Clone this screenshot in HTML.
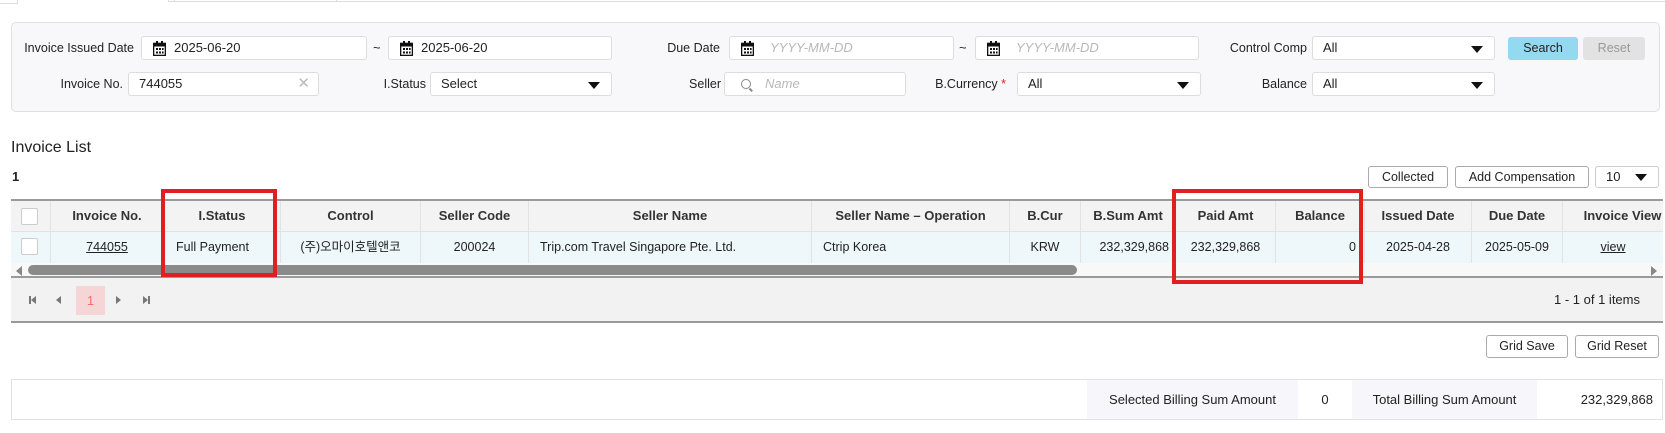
<!DOCTYPE html>
<html><head><meta charset="utf-8"><style>
*{box-sizing:border-box;margin:0;padding:0}
body{width:1665px;height:433px;background:#fff;font-family:"Liberation Sans","Noto Sans CJK KR",sans-serif;font-size:13px;color:#222;position:relative;overflow:hidden}
.a{position:absolute}
.lbl{position:absolute;font-size:12.5px;color:#222;line-height:24px;text-align:right}
.inp{position:absolute;background:#fff;border:1px solid #dcdcdc;border-radius:3px;height:24px;line-height:22px;padding-left:10px;font-size:13px}
.ph{color:#b8b8b8;font-style:italic}
.cal{position:absolute;left:11px;top:4px}
.arr{position:absolute;right:11px;top:9px;width:0;height:0;border-left:6px solid transparent;border-right:6px solid transparent;border-top:7px solid #111}
.btn{position:absolute;border:1px solid #aaa;border-radius:3px;background:#fff;text-align:center;font-size:12.5px}
.c{position:absolute;top:0;height:100%;border-right:1px solid #e2e2e2;text-align:center;font-size:12.5px}
.hr .c{font-weight:bold;font-size:13px;color:#333}
.red{position:absolute;border:4px solid #e02020}
</style></head><body>
<div class="a" style="left:0;top:0;width:18px;height:4px;border-bottom:1px solid #ddd;border-right:1px solid #ddd"></div>
<div class="a" style="left:168px;top:0;width:1497px;height:2px;border-bottom:1px solid #ddd"></div>
<div class="a" style="left:168px;top:0;width:7px;height:2px;border-left:1px solid #ddd;border-right:1px solid #ddd"></div>
<div class="a" style="left:336px;top:0;width:1px;height:2px;background:#ddd"></div>

<div class="a" style="left:11px;top:22px;width:1649px;height:90px;background:#f8f7fa;border:1px solid #e0dfe3;border-radius:5px"></div>
<div class="lbl" style="left:20px;top:36px;width:114px">Invoice Issued Date</div>
<div class="inp" style="left:141px;top:36px;width:226px;padding-left:32px"><svg class="cal" width="13" height="15" viewBox="0 0 13 15"><rect x="3" y="0" width="2" height="4" fill="#111"/><rect x="8" y="0" width="2" height="4" fill="#111"/><rect x="0.5" y="2.5" width="12" height="12" fill="#fff" stroke="#111" stroke-width="1.6"/><rect x="0.5" y="2.5" width="12" height="3" fill="#111"/><g fill="#111"><rect x="3" y="7" width="2" height="2"/><rect x="6" y="7" width="2" height="2"/><rect x="9" y="7" width="1.6" height="2"/><rect x="3" y="10.5" width="2" height="2"/><rect x="6" y="10.5" width="2" height="2"/><rect x="9" y="10.5" width="1.6" height="2"/></g></svg>2025-06-20</div>
<div class="a" style="left:373px;top:36px;line-height:24px">~</div>
<div class="inp" style="left:388px;top:36px;width:224px;padding-left:32px"><svg class="cal" width="13" height="15" viewBox="0 0 13 15"><rect x="3" y="0" width="2" height="4" fill="#111"/><rect x="8" y="0" width="2" height="4" fill="#111"/><rect x="0.5" y="2.5" width="12" height="12" fill="#fff" stroke="#111" stroke-width="1.6"/><rect x="0.5" y="2.5" width="12" height="3" fill="#111"/><g fill="#111"><rect x="3" y="7" width="2" height="2"/><rect x="6" y="7" width="2" height="2"/><rect x="9" y="7" width="1.6" height="2"/><rect x="3" y="10.5" width="2" height="2"/><rect x="6" y="10.5" width="2" height="2"/><rect x="9" y="10.5" width="1.6" height="2"/></g></svg>2025-06-20</div>
<div class="lbl" style="left:40px;top:72px;width:83px">Invoice No.</div>
<div class="inp" style="left:128px;top:72px;width:191px">744055<span class="a" style="right:8px;top:0;color:#bbb;font-size:15px">✕</span></div>
<div class="lbl" style="left:370px;top:72px;width:56px">I.Status</div>
<div class="inp" style="left:430px;top:72px;width:182px">Select<span class="arr"></span></div>

<div class="lbl" style="left:650px;top:36px;width:70px">Due Date</div>
<div class="inp" style="left:729px;top:36px;width:225px;padding-left:40px"><svg class="cal" width="13" height="15" viewBox="0 0 13 15"><rect x="3" y="0" width="2" height="4" fill="#111"/><rect x="8" y="0" width="2" height="4" fill="#111"/><rect x="0.5" y="2.5" width="12" height="12" fill="#fff" stroke="#111" stroke-width="1.6"/><rect x="0.5" y="2.5" width="12" height="3" fill="#111"/><g fill="#111"><rect x="3" y="7" width="2" height="2"/><rect x="6" y="7" width="2" height="2"/><rect x="9" y="7" width="1.6" height="2"/><rect x="3" y="10.5" width="2" height="2"/><rect x="6" y="10.5" width="2" height="2"/><rect x="9" y="10.5" width="1.6" height="2"/></g></svg><span class="ph">YYYY-MM-DD</span></div>
<div class="a" style="left:959px;top:36px;line-height:24px">~</div>
<div class="inp" style="left:975px;top:36px;width:224px;padding-left:40px"><svg class="cal" width="13" height="15" viewBox="0 0 13 15"><rect x="3" y="0" width="2" height="4" fill="#111"/><rect x="8" y="0" width="2" height="4" fill="#111"/><rect x="0.5" y="2.5" width="12" height="12" fill="#fff" stroke="#111" stroke-width="1.6"/><rect x="0.5" y="2.5" width="12" height="3" fill="#111"/><g fill="#111"><rect x="3" y="7" width="2" height="2"/><rect x="6" y="7" width="2" height="2"/><rect x="9" y="7" width="1.6" height="2"/><rect x="3" y="10.5" width="2" height="2"/><rect x="6" y="10.5" width="2" height="2"/><rect x="9" y="10.5" width="1.6" height="2"/></g></svg><span class="ph">YYYY-MM-DD</span></div>
<div class="lbl" style="left:660px;top:72px;width:61px">Seller</div>
<div class="inp" style="left:724px;top:72px;width:182px;padding-left:40px"><span class="a" style="left:16px;top:6px;width:10px;height:10px;border:1.5px solid #888;border-radius:50%"></span><span class="a" style="left:24px;top:16px;width:4px;height:1.5px;background:#888;transform:rotate(45deg)"></span><span class="ph">Name</span></div>
<div class="lbl" style="left:900px;top:72px;width:106px">B.Currency <span style="color:#e02020">*</span></div>
<div class="inp" style="left:1017px;top:72px;width:184px">All<span class="arr"></span></div>

<div class="lbl" style="left:1200px;top:36px;width:107px">Control Comp</div>
<div class="inp" style="left:1312px;top:36px;width:183px">All<span class="arr"></span></div>
<div class="a" style="left:1508px;top:37px;width:70px;height:23px;background:#93d9f0;border-radius:3px;text-align:center;line-height:23px;font-size:12.5px">Search</div>
<div class="a" style="left:1583px;top:37px;width:62px;height:23px;background:#e2e2e2;border-radius:3px;text-align:center;line-height:23px;font-size:12.5px;color:#999">Reset</div>
<div class="lbl" style="left:1230px;top:72px;width:77px">Balance</div>
<div class="inp" style="left:1312px;top:72px;width:183px">All<span class="arr"></span></div>

<div class="a" style="left:11px;top:138px;font-size:16px;line-height:20px">Invoice List</div>
<div class="a" style="left:12px;top:169px;font-size:13px;font-weight:bold;line-height:16px">1</div>
<div class="btn" style="left:1368px;top:166px;width:80px;height:22px;line-height:20px">Collected</div>
<div class="btn" style="left:1455px;top:166px;width:134px;height:22px;line-height:20px">Add Compensation</div>
<div class="inp" style="left:1595px;top:166px;width:64px;height:22px;line-height:20px;border-color:#ccc">10<span class="arr" style="top:7px"></span></div>

<div class="a" style="left:11px;top:199px;width:1652px;height:124px;overflow:hidden;border-top:2px solid #9a9a9a">
 <div class="a hr" style="left:0;top:0;width:1660px;height:31px;background:#f3f3f3;border-bottom:1px solid #e2e2e2;line-height:30px">
  <div class="c" style="left:0;width:40px"><span class="a" style="left:10px;top:7px;width:17px;height:17px;background:#fff;border:1px solid #ccc;border-radius:2px"></span></div>
  <div class="c" style="left:40px;width:113px">Invoice No.</div>
  <div class="c" style="left:153px;width:117px">I.Status</div>
  <div class="c" style="left:270px;width:140px">Control</div>
  <div class="c" style="left:410px;width:108px">Seller Code</div>
  <div class="c" style="left:518px;width:283px">Seller Name</div>
  <div class="c" style="left:801px;width:198px">Seller Name – Operation</div>
  <div class="c" style="left:999px;width:71px">B.Cur</div>
  <div class="c" style="left:1070px;width:95px">B.Sum Amt</div>
  <div class="c" style="left:1165px;width:100px">Paid Amt</div>
  <div class="c" style="left:1265px;width:89px">Balance</div>
  <div class="c" style="left:1354px;width:107px">Issued Date</div>
  <div class="c" style="left:1461px;width:91px">Due Date</div>
  <div class="c" style="left:1552px;width:120px;white-space:nowrap">Invoice View</div>
 </div>
 <div class="a" style="left:0;top:31px;width:1660px;height:31px;background:#eef8fb;line-height:31px">
  <div class="c" style="left:0;width:40px"><span class="a" style="left:10px;top:6px;width:17px;height:17px;background:#fff;border:1px solid #ccc;border-radius:2px"></span></div>
  <div class="c" style="left:40px;width:113px"><u>744055</u></div>
  <div class="c" style="left:153px;width:117px;text-align:left;padding-left:12px">Full Payment</div>
  <div class="c" style="left:270px;width:140px">(주)오마이호텔앤코</div>
  <div class="c" style="left:410px;width:108px">200024</div>
  <div class="c" style="left:518px;width:283px;text-align:left;padding-left:11px">Trip.com Travel Singapore Pte. Ltd.</div>
  <div class="c" style="left:801px;width:198px;text-align:left;padding-left:11px">Ctrip Korea</div>
  <div class="c" style="left:999px;width:71px">KRW</div>
  <div class="c" style="left:1070px;width:95px;text-align:right;padding-right:6px">232,329,868</div>
  <div class="c" style="left:1165px;width:100px">232,329,868</div>
  <div class="c" style="left:1265px;width:89px;text-align:right;padding-right:8px">0</div>
  <div class="c" style="left:1354px;width:107px">2025-04-28</div>
  <div class="c" style="left:1461px;width:91px">2025-05-09</div>
  <div class="c" style="left:1552px;width:100px;border:none"><u>view</u></div>
 </div>
 <div class="a" style="left:0;top:62px;width:1652px;height:15px;background:#f8f8f8;border-bottom:2px solid #9a9a9a"></div>
 <div class="a" style="left:5px;top:65px;width:0;height:0;border-top:5px solid transparent;border-bottom:5px solid transparent;border-right:6px solid #888"></div>
 <div class="a" style="left:17px;top:64px;width:1049px;height:10px;background:#8a8a8a;border-radius:5px"></div>
 <div class="a" style="left:1640px;top:65px;width:0;height:0;border-top:5px solid transparent;border-bottom:5px solid transparent;border-left:6px solid #888"></div>
 <div class="a" style="left:0;top:77px;width:1652px;height:45px;background:#f2f2f2;border-bottom:2px solid #9a9a9a"></div>
</div>
<div class="a" style="left:29px;top:296px;width:2px;height:8px;background:#777"></div>
<div class="a" style="left:31px;top:296px;border-top:4px solid transparent;border-bottom:4px solid transparent;border-right:5px solid #777"></div>
<div class="a" style="left:56px;top:296px;border-top:4px solid transparent;border-bottom:4px solid transparent;border-right:5px solid #777"></div>
<div class="a" style="left:76px;top:286px;width:29px;height:29px;background:#f5d5d5;color:#f07070;text-align:center;line-height:29px;font-size:13px">1</div>
<div class="a" style="left:116px;top:296px;border-top:4px solid transparent;border-bottom:4px solid transparent;border-left:5px solid #777"></div>
<div class="a" style="left:143px;top:296px;border-top:4px solid transparent;border-bottom:4px solid transparent;border-left:5px solid #777"></div>
<div class="a" style="left:148px;top:296px;width:2px;height:8px;background:#777"></div>
<div class="a" style="left:1500px;top:292px;width:140px;text-align:right;font-size:13px;line-height:16px">1 - 1 of 1 items</div>

<div class="red" style="left:161px;top:189px;width:116px;height:88px"></div>
<div class="red" style="left:1172px;top:189px;width:191px;height:95px"></div>

<div class="btn" style="left:1486px;top:335px;width:82px;height:23px;line-height:21px">Grid Save</div>
<div class="btn" style="left:1575px;top:335px;width:84px;height:23px;line-height:21px">Grid Reset</div>

<div class="a" style="left:11px;top:379px;width:1652px;height:41px;border:1px solid #e2e2e2;line-height:39px;font-size:13px">
 <div class="a" style="left:1075px;top:0;width:211px;height:39px;background:#f7f6fa;text-align:center">Selected Billing Sum Amount</div>
 <div class="a" style="left:1286px;top:0;width:54px;height:39px;text-align:center">0</div>
 <div class="a" style="left:1340px;top:0;width:185px;height:39px;background:#f7f6fa;text-align:center">Total Billing Sum Amount</div>
 <div class="a" style="left:1525px;top:0;width:120px;height:39px;text-align:right;padding-right:4px">232,329,868</div>
</div>
</body></html>
